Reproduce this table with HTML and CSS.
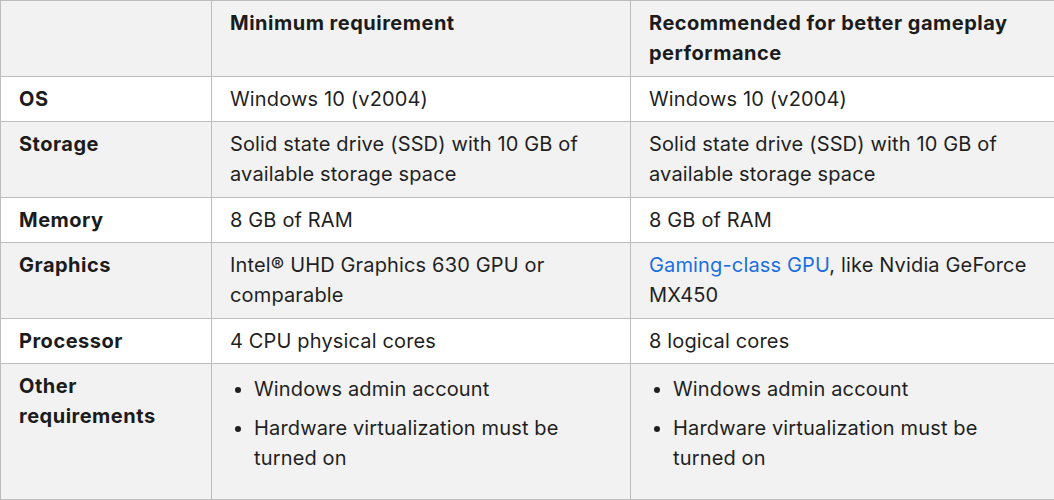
FILE: index.html
```html
<!DOCTYPE html>
<html>
<head>
<meta charset="utf-8">
<link rel="stylesheet" href="styles.css">
</head>
<body>
<table class="spec">
  <colgroup>
    <col class="c1">
    <col class="c2">
    <col class="c3">
  </colgroup>
  <thead>
    <tr class="shade">
      <th></th>
      <th>Minimum requirement</th>
      <th>Recommended for better gameplay performance</th>
    </tr>
  </thead>
  <tbody>
    <tr>
      <th>OS</th>
      <td>Windows 10 (v2004)</td>
      <td>Windows 10 (v2004)</td>
    </tr>
    <tr class="shade">
      <th>Storage</th>
      <td>Solid state drive (SSD) with 10 GB of available storage space</td>
      <td>Solid state drive (SSD) with 10 GB of available storage space</td>
    </tr>
    <tr>
      <th>Memory</th>
      <td>8 GB of RAM</td>
      <td>8 GB of RAM</td>
    </tr>
    <tr class="shade">
      <th>Graphics</th>
      <td>Intel® UHD Graphics 630 GPU or comparable</td>
      <td><a class="link" href="#">Gaming-class GPU</a>, like Nvidia GeForce MX450</td>
    </tr>
    <tr>
      <th>Processor</th>
      <td>4 CPU physical cores</td>
      <td>8 logical cores</td>
    </tr>
    <tr class="shade">
      <th>Other requirements</th>
      <td>
        <ul class="list">
          <li>Windows admin account</li>
          <li>Hardware virtualization must be turned on</li>
        </ul>
      </td>
      <td>
        <ul class="list">
          <li>Windows admin account</li>
          <li>Hardware virtualization must be turned on</li>
        </ul>
      </td>
    </tr>
  </tbody>
</table>
</body>
</html>
```

FILE: styles.css
```css
html, body {
  margin: 0;
  padding: 0;
  background: #ffffff;
}
body {
  font-family: Inter, Roboto, sans-serif;
  font-size: 20px;
  letter-spacing: 0.15px;
  color: #1f1f1f;
}
.spec {
  width: 1054px;
  border-collapse: collapse;
  table-layout: fixed;
}
.c1 { width: 211px; }
.c2 { width: 419px; }
.c3 { width: 424px; }
.spec th,
.spec td {
  border: 1px solid #bdbdbd;
  padding: 7.25px 18px 7.25px 18px;
  line-height: 30px;
  text-align: left;
  vertical-align: top;
  font-weight: 400;
}
.spec th {
  font-weight: 700;
  letter-spacing: 0.5px;
  color: #1b1b1b;
}
.shade {
  background: #f2f2f2;
}
.link {
  color: #1a6fe0;
  text-decoration: none;
}
.list {
  margin: 0 0 18px 0;
  padding: 0 0 0 24px;
}
.list li {
  margin: 3px 0 0 0;
  line-height: 30.5px;
}
.list li + li {
  margin-top: 8px;
}
```
